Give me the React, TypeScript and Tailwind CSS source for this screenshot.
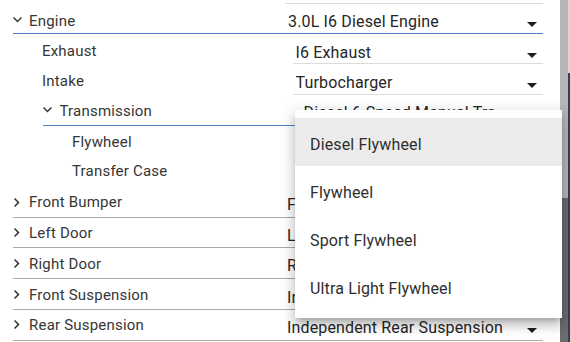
import React from "react";

const Down = ({ cls }: { cls: string }) => (
  <svg viewBox="6 8.59 12 7.41" width="9" height="5.56" className={cls}>
    <path d="M16.59 8.59 12 13.17 7.41 8.59 6 10l6 6 6-6z" fill="currentColor" />
  </svg>
);

const Right = ({ cls }: { cls: string }) => (
  <svg viewBox="8.59 6 7.41 12" width="5.56" height="9" className={cls}>
    <path d="M10 6 8.59 7.41 13.17 12l-4.58 4.59L10 18l6-6z" fill="currentColor" />
  </svg>
);

const Caret = () => (
  <svg width="10" height="5" viewBox="0 0 10 5" className="shrink-0 mb-[2px]">
    <path d="M0 0h10L5 5z" fill="#1f1f1f" />
  </svg>
);

const SelText = ({ text, pt, clip = "" }: { text: string; pt: string; clip?: string }) => (
  <div className={`flex items-baseline justify-between h-full pr-[6.5px] ${pt}`}>
    <span className={`text-[16px] leading-[24px] tracking-[0.15px] text-[#262626] whitespace-nowrap overflow-hidden ${clip}`}>{text}</span>
    <Caret />
  </div>
);

const Collapsed = ({
  h,
  label,
  value,
  chevMt,
  labelPt,
  selPt,
}: {
  h: string;
  label: string;
  value: string;
  chevMt: string;
  labelPt: string;
  selPt: string;
}) => (
  <div className={`flex ${h}`}>
    <div className="ml-[13px] flex w-[530px] border-b border-[#ababab]">
      <div className="flex w-[272px] shrink-0 items-start">
        <Right cls={`ml-[1px] text-[#333] ${chevMt}`} />
        <span className={`ml-[9.5px] text-[15px] leading-[20px] tracking-[0.2px] text-[#363636] ${labelPt}`}>{label}</span>
      </div>
      <div className="w-[258px] pl-[2px]">
        <SelText text={value} pt={selPt} />
      </div>
    </div>
  </div>
);

const menuItems = ["Diesel Flywheel", "Flywheel", "Sport Flywheel", "Ultra Light Flywheel"];

export default function App() {
  return (
    <div
      className="relative flex h-[342px] w-[570px] overflow-hidden bg-white"
      style={{ fontFamily: "Roboto, 'Liberation Sans', sans-serif" }}
    >
      <div className="flex w-[560px] shrink-0 flex-col">
        {/* previous row underline */}
        <div className="h-[4px]">
          <div className="ml-[285px] h-full w-[258px] border-b border-[#dcdcdc]" />
        </div>

        {/* Engine */}
        <div className="flex h-[30px]">
          <div className="ml-[13px] flex w-[530px] border-b border-[#4a84c0]">
            <div className="flex w-[272px] shrink-0 items-start">
              <Down cls="mt-[13px] text-[#333]" />
              <span className="ml-[7px] pt-[7px] text-[15px] leading-[20px] tracking-[0.2px] text-[#363636]">Engine</span>
            </div>
            <div className="w-[258px] pl-[3px]">
              <SelText text="3.0L I6 Diesel Engine" pt="pt-[6px]" />
            </div>
          </div>
        </div>

        {/* Exhaust */}
        <div className="flex h-[30px]">
          <div className="w-[293px] shrink-0 pl-[42px]">
            <span className="block pt-[7px] text-[15px] leading-[20px] tracking-[0.2px] text-[#363636]">Exhaust</span>
          </div>
          <div className="w-[250px] border-b border-[#dcdcdc] pl-[2.5px]">
            <SelText text="I6 Exhaust" pt="pt-[7px]" />
          </div>
        </div>

        {/* Intake */}
        <div className="flex h-[31px]">
          <div className="w-[293px] shrink-0 pl-[42px]">
            <span className="block pt-[7px] text-[15px] leading-[20px] tracking-[0.2px] text-[#363636]">Intake</span>
          </div>
          <div className="w-[250px] border-b border-[#dcdcdc] pl-[2.5px]">
            <SelText text="Turbocharger" pt="pt-[7px]" />
          </div>
        </div>

        {/* Transmission */}
        <div className="flex h-[31px]">
          <div className="ml-[43px] flex w-[500px] border-b border-[#4a84c0]">
            <div className="flex w-[258px] shrink-0 items-start">
              <Down cls="mt-[12px] text-[#333]" />
              <span className="ml-[7.5px] pt-[6px] text-[15px] leading-[20px] tracking-[0.2px] text-[#363636]">Transmission</span>
            </div>
            <div className="w-[242px] pl-[2.5px]">
              <SelText text="Diesel 6-Speed Manual Transmission" pt="pt-[6px]" clip="max-w-[192px]" />
            </div>
          </div>
        </div>

        {/* Flywheel */}
        <div className="h-[31px] pl-[72px]">
          <span className="block pt-[6px] text-[15px] leading-[20px] tracking-[0.2px] text-[#363636]">Flywheel</span>
        </div>

        {/* Transfer Case */}
        <div className="h-[30px] pl-[72px]">
          <span className="block pt-[4px] text-[15px] leading-[20px] tracking-[0.2px] text-[#363636]">Transfer Case</span>
        </div>

        <Collapsed h="h-[31px]" label="Front Bumper" value="Front Bumper" chevMt="mt-[11px]" labelPt="pt-[5px]" selPt="pt-[6px]" />
        <Collapsed h="h-[30px]" label="Left Door" value="Left Door" chevMt="mt-[10px]" labelPt="pt-[5px]" selPt="pt-[6px]" />
        <Collapsed h="h-[31px]" label="Right Door" value="Right Door" chevMt="mt-[11px]" labelPt="pt-[6px]" selPt="pt-[6px]" />
        <Collapsed h="h-[31px]" label="Front Suspension" value="Independent Front Suspension" chevMt="mt-[11px]" labelPt="pt-[6px]" selPt="pt-[7px]" />
        <Collapsed h="h-[31px]" label="Rear Suspension" value="Independent Rear Suspension" chevMt="mt-[10px]" labelPt="pt-[5px]" selPt="pt-[6px]" />
      </div>

      {/* right edge strip */}
      <div className="flex w-[8px] shrink-0 flex-col">
        <div className="h-[198px] bg-[#b6b6b6]" />
        <div className="flex-1 bg-[#6c6c6c]" />
      </div>
      <div className="flex w-[2px] shrink-0 flex-col">
        <div className="h-[73px] bg-[#dcd7ca]" />
        <div className="flex-1 bg-[#36404e]" />
      </div>

      {/* dropdown menu */}
      <div className="absolute left-[295px] top-[110px] w-[267px] bg-white py-2 shadow-[0px_5px_5px_-3px_rgba(0,0,0,0.2),0px_8px_10px_1px_rgba(0,0,0,0.14),0px_3px_14px_2px_rgba(0,0,0,0.12)]">
        {menuItems.map((m, i) => (
          <div
            key={m}
            className={`flex h-[48px] items-center pl-[15px] pt-[5px] text-[16px] leading-[24px] tracking-[0.15px] text-[#2e2e2e] ${
              i === 0 ? "bg-[#ebebeb]" : ""
            }`}
          >
            {m}
          </div>
        ))}
      </div>
    </div>
  );
}
